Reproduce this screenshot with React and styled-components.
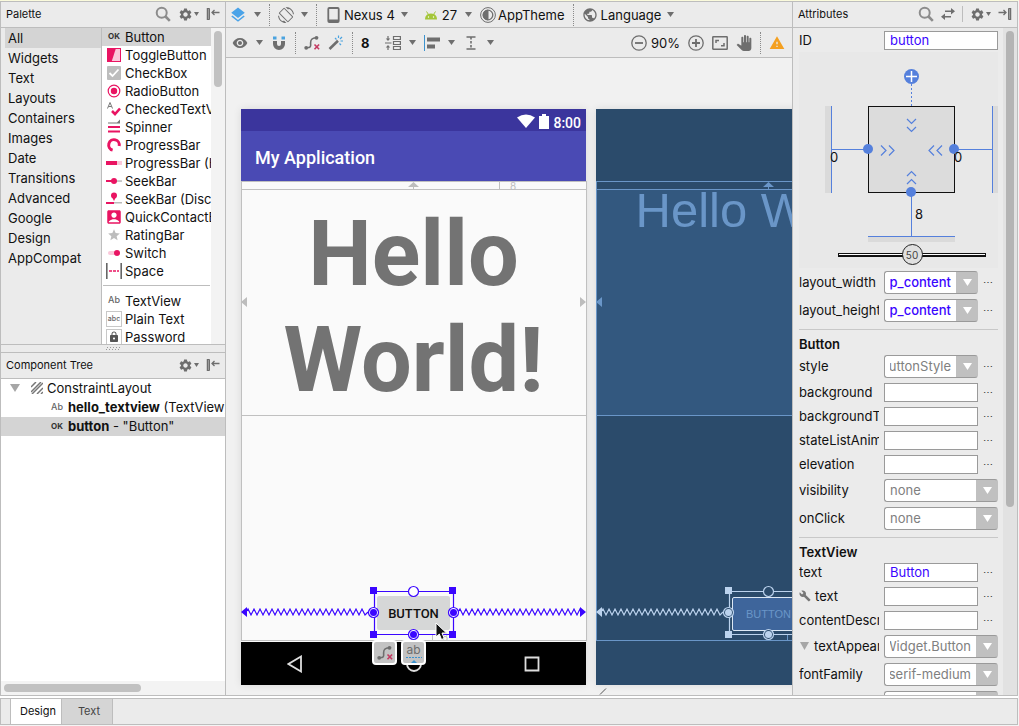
import React from "react";
import styled, { createGlobalStyle, css } from "styled-components";
import { MdLayers, MdVisibility, MdScreenRotation, MdPublic, MdPanTool, MdWarning, MdSettings, MdBuild, MdAccountBox, MdStar, MdLock } from "react-icons/md";

const line = "#bdbdbd";
const chrome = "#ebebeb";
const iconGray = "#6e6e6e";
const pink = "#e91462";
const violet = "#3a06ff";
const wire = "#5580dc";

const GlobalStyle = createGlobalStyle`
  *, *::before, *::after { box-sizing: border-box; }
  body { margin: 0; font: 13px/18px Inter, "Noto Sans", sans-serif; color: #111; background: ${chrome}; }
  button, input, select { font: inherit; color: inherit; margin: 0; }
  h2, h3, ul { margin: 0; padding: 0; font: inherit; list-style: none; }
  svg { display: block; flex: none; }
`;

/* ---------- page frame ---------- */
const Window = styled.div`
  display: flex;
  flex-direction: column;
  height: 100vh;
  min-height: 480px;
  overflow: hidden;
  border-top: 1px solid #fafadc;
  border-right: 1px solid #f4f4f4;
  border-bottom: 1px solid #f4f4f4;
`;
const Workspace = styled.div`
  flex: 1;
  min-height: 0;
  display: grid;
  grid-template-columns: 226px minmax(0, 1fr) 226px;
  border-top: 1px solid ${line};
  border-bottom: 1px solid ${line};
`;
const Side = styled.aside`
  display: flex;
  flex-direction: column;
  min-height: 0;
  min-width: 0;
  background: ${chrome};
  border-left: 1px solid ${line};
  border-right: 1px solid ${line};
`;
const PanelHeader = styled.header`
  flex: none;
  display: flex;
  align-items: center;
  gap: 7px;
  height: 26px;
  padding: 0 5px 1px;
  border-bottom: 1px solid ${line};
`;
const PanelTitle = styled.h2`
  flex: 1;
  font-size: 11px;
`;
const HeaderRule = styled.span`
  width: 1px;
  height: 16px;
  background: ${line};
`;
const IconButton = styled.button`
  display: flex;
  align-items: center;
  gap: ${(p) => p.$gap || 0}px;
  padding: 0;
  border: 0;
  background: none;
  color: ${(p) => p.$color || iconGray};
  white-space: nowrap;
`;
const Label = styled.span`
  color: #111;
  font-weight: ${(p) => (p.$bold ? 700 : 400)};
`;

/* ---------- palette ---------- */
const PaletteBody = styled.div`
  flex: 317 1 0;
  min-height: 0;
  display: flex;
  overflow: hidden;
`;
const Categories = styled.ul`
  width: 101px;
  flex: none;
  padding-left: 4px;
  border-right: 1px solid ${line};
`;
const Category = styled.li`
  padding-left: 3px;
  line-height: 20px;
  background: ${(p) => (p.$active ? "#d4d4d4" : "transparent")};
`;
const Widgets = styled.ul`
  flex: 1;
  min-width: 0;
  overflow: hidden;
  background: #fff;
`;
const Widget = styled.li`
  display: flex;
  align-items: center;
  gap: 3px;
  height: 18px;
  padding-left: 4px;
  white-space: nowrap;
  background: ${(p) => (p.$active ? "#d4d4d4" : "transparent")};
`;
const WidgetDivider = styled.li`
  height: 1px;
  margin: 5px 1px 6px;
  background: ${line};
`;
const VTrack = styled.div`
  flex: none;
  width: 14px;
  padding: 3px;
  background: ${(p) => (p.$dark ? "#e2e2e2" : "#f3f3f3")};
`;
const VThumb = styled.div`
  width: 8px;
  height: ${(p) => p.$size};
  border-radius: 4px;
  background: ${(p) => (p.$dark ? "#b4b4b4" : "#c1c1c1")};
`;
const Splitter = styled.div`
  flex: none;
  height: 9px;
  display: flex;
  align-items: center;
  justify-content: center;
  border-top: 1px solid ${line};
  border-bottom: 1px solid ${line};
`;

/* ---------- component tree ---------- */
const Tree = styled.ul`
  flex: 302 1 0;
  min-height: 0;
  overflow: hidden;
  background: #fff;
`;
const TreeRow = styled.li`
  display: flex;
  align-items: center;
  gap: 4px;
  height: 19px;
  padding: 0 0 1px ${(p) => (p.$depth ? 49 : 9)}px;
  white-space: pre;
  background: ${(p) => (p.$active ? "#d4d4d4" : "transparent")};
`;
const Toggle = styled.span`
  width: 17px;
`;
const HTrack = styled.div`
  flex: none;
  height: 14px;
  padding: 3px;
  background: #f3f3f3;
`;
const HThumb = styled.div`
  width: 63%;
  height: 8px;
  border-radius: 4px;
  background: #c1c1c1;
`;

/* ---------- editor ---------- */
const Editor = styled.main`
  display: flex;
  flex-direction: column;
  min-width: 0;
  min-height: 0;
  background: ${chrome};
`;
const Toolbar = styled.div`
  flex: none;
  display: flex;
  align-items: center;
  gap: 8px;
  height: ${(p) => (p.$tall ? 30 : 26)}px;
  padding: 0 7px 0 ${(p) => (p.$tall ? 6 : 3)}px;
  border-bottom: 1px solid ${line};
  overflow: hidden;
`;
const Dots = styled.span`
  width: 1px;
  height: 22px;
  border-left: 1px dotted #8a8a8a;
`;
const Spacer = styled.span`
  flex: 1;
`;
const Gap = styled.span`
  width: 0;
`;
const Cluster = styled.span`
  display: flex;
  align-items: center;
  gap: 4px;
`;
const Surface = styled.div`
  flex: 1;
  min-height: 0;
  position: relative;
  display: flex;
  gap: 10px;
  padding: 51px 0 0 15px;
  overflow: hidden;
  background: #f1f1f1;
`;
const Grip = styled.svg`
  position: absolute;
  left: 373px;
  bottom: 0;
`;
const Screen = styled.section`
  flex: none;
  position: relative;
  width: 345px;
  height: 576px;
  display: flex;
  flex-direction: column;
  background: ${(p) => (p.$blue ? "#2b4b6b" : "#fafafa")};
  box-shadow: 0 0 8px rgba(0, 0, 0, 0.1);
`;
const StatusBar = styled.div`
  height: 22px;
  display: flex;
  align-items: center;
  justify-content: flex-end;
  gap: 4px;
  padding: 3px 5px 0 0;
  color: #fff;
  background: #3b359d;
  font: 500 14px/14px Roboto, sans-serif;
`;
const Clock = styled.span`
  padding-top: 3px;
`;
const AppBar = styled.div`
  height: 50px;
  padding: 2px 14px 0;
  color: #fff;
  background: #4a4ab4;
  font: 500 18px/50px Roboto, sans-serif;
`;
const Content = styled.div`
  flex: 1;
  display: flex;
  flex-direction: column;
  align-items: center;
  padding-top: ${(p) => (p.$blue ? 80 : 8)}px;
`;
const Hello = styled.div`
  width: 100%;
  height: 226px;
  padding-top: 13px;
  text-align: center;
  color: #737373;
  font: 700 90px/106px Roboto, sans-serif;
`;
const HelloBlue = styled.div`
  width: 100%;
  height: 227px;
  display: flex;
  justify-content: center;
  white-space: nowrap;
  color: #6a96c8;
  background: #33587f;
  font: 49px/42px "Liberation Sans", Arial, sans-serif;
`;
const Raised = styled.button`
  width: 73px;
  height: 34px;
  margin-top: 181px;
  padding: 0;
  border: ${(p) => (p.$blue ? "1px solid #dce8f5" : "0")};
  border-radius: 2px;
  color: ${(p) => (p.$blue ? "#6a96c8" : "#111")};
  background: ${(p) => (p.$blue ? "#3e659b" : "#d6d7d7")};
  font: ${(p) => (p.$blue ? '11px "Liberation Sans", Arial' : "500 13px Roboto")}, sans-serif;
`;
const NavBar = styled.div`
  height: 43px;
  display: flex;
  align-items: center;
  justify-content: space-between;
  padding: 0 46px;
  background: #000;
`;
const Overlay = styled.svg`
  position: absolute;
  inset: 0;
  overflow: visible;
  pointer-events: none;
`;
const Chips = styled.div`
  position: absolute;
  left: 131px;
  top: 531px;
  display: flex;
  gap: 4px;
`;
const Chip = styled.button`
  width: 25px;
  height: 25px;
  display: flex;
  flex-direction: column;
  align-items: center;
  justify-content: center;
  padding: 0;
  border: 2px solid #fff;
  border-radius: 4px;
  background: #c3c3c3;
  color: #6e6e6e;
  font-size: 12px;
  line-height: 13px;
`;
const Pointer = styled.svg`
  position: absolute;
  left: 194px;
  top: 513px;
`;

/* ---------- attributes ---------- */
const AttrBody = styled.div`
  flex: 1;
  min-height: 0;
  display: flex;
  overflow: hidden;
`;
const AttrForm = styled.form`
  flex: 1;
  min-width: 0;
  display: flex;
  flex-direction: column;
  gap: 5px;
  padding: 3px 5px 0 6px;
  overflow: hidden;
`;
const Row = styled.div`
  flex: none;
  display: flex;
  align-items: center;
  gap: 5px;
  height: ${(p) => (p.$tall ? 23 : 19)}px;
`;
const RowLabel = styled.label`
  flex: none;
  display: flex;
  align-items: center;
  gap: 4px;
  width: 80px;
  padding-bottom: 1px;
  overflow: hidden;
  white-space: nowrap;
`;
const Field = styled.input`
  flex: 1;
  min-width: 0;
  height: 19px;
  padding: 0 5px 1px;
  border: 1px solid #9a9a9a;
  border-radius: 0;
  outline: 0;
  background: #fff;
  color: ${violet};
`;
const Combo = styled.span`
  flex: 1;
  min-width: 0;
  display: grid;
  align-items: center;
  color: #fff;
  svg { grid-area: 1 / 1; justify-self: end; margin-right: 6px; pointer-events: none; }
`;
const Select = styled.select`
  grid-area: 1 / 1;
  appearance: none;
  width: 100%;
  height: 23px;
  padding: 0 ${(p) => (p.$clip ? 26 : 22)}px 1px 5px;
  border: 1px solid #9a9a9a;
  border-right-color: #c0c0c0;
  border-radius: 3px;
  background: linear-gradient(to left, #c0c0c0 21px, #fff 21px);
  color: ${(p) => (p.$set ? violet : "#808080")};
  font-weight: ${(p) => (p.$set ? 500 : 400)};
  ${(p) => p.$clip && css`direction: rtl;`}
`;
const More = styled.button`
  width: 15px;
  height: 14px;
  padding: 0 6px 2px 0;
  border: 0;
  background: none;
  font-size: 10px;
  line-height: 10px;
  color: #333;
`;
const GroupTitle = styled.h3`
  flex: none;
  height: 26px;
  margin: 2px 0 -5px;
  padding-top: 4px;
  border-top: 1px solid #c8c8c8;
  line-height: 20px;
  font-weight: 600;
`;
const Inspector = styled.div`
  flex: none;
  display: flex;
  flex-direction: column;
  align-items: center;
  height: 216px;
  margin: -3px 0 -2px;
  background: #e8e8e8;
  font-size: 13px;
`;
const Bias = styled.label`
  display: grid;
  place-items: center;
  width: 148px;
  margin: 1px 0 0 27px;
  span { grid-area: 1 / 1; font-size: 10px; color: #444; pointer-events: none; z-index: 1; }
`;
const Range = styled.input`
  grid-area: 1 / 1;
  appearance: none;
  width: 100%;
  height: 23px;
  background: none;
  &::-webkit-slider-runnable-track { height: 4px; background: #fff; border: 1px solid #111; border-bottom-width: 2px; }
  &::-webkit-slider-thumb { appearance: none; width: 21px; height: 21px; margin-top: -10px; border: 1px solid #222; border-radius: 50%; background: #e0e0e0; }
`;

/* ---------- tabs ---------- */
const TabBar = styled.nav`
  flex: none;
  display: flex;
  height: 27px;
  margin-top: 2px;
  padding-left: 9px;
  border: 1px solid ${line};
  outline: 2px solid #fff;
  background: ${chrome};
`;
const Tab = styled.button`
  width: 51px;
  padding: 0 0 2px 4px;
  border: 0;
  border-right: 1px solid ${line};
  font-size: 11px;
  color: ${(p) => (p.$active ? "#111" : "#444")};
  background: ${(p) => (p.$active ? "#fff" : "#d5d5d5")};
  &:first-child { width: 52px; border-left: 1px solid ${line}; }
`;

/* ---------- icons ---------- */
const icon16 = { width: 16, height: 16, viewBox: "0 0 16 16" };
const Caret = ({ size = 7 }) => (
  <svg width={size} height={size > 6 ? 5 : 4} viewBox="0 0 8 5" preserveAspectRatio="none"><path d="M0 0h8L4 5z" fill="currentColor" /></svg>
);
const Search = () => (
  <svg {...icon16} fill="none" stroke="currentColor"><circle cx="6.700" cy="6.700" r="5" strokeWidth="2" /><path d="M10.500 10.500l4.300 4.300" strokeWidth="2.600" /></svg>
);
const Dock = ({ flip }) => (
  <svg width="14" height="12" viewBox="0 0 14 12" fill="none" stroke="currentColor">
    <g transform={flip ? "translate(14 0) scale(-1 1)" : undefined}>
      <path d="M1.500.5h2v11h-2z" fill="#aaa" /><path d="M1.500 0v12" strokeWidth="1.500" /><path d="M6 4.500h7.500M8.500 2L6 4.500 8.500 7" strokeWidth="1.300" />
    </g>
  </svg>
);
const Gear = () => (
  <IconButton type="button" aria-label="Settings" $gap={1}><MdSettings size={15} /><Caret size={5} /></IconButton>
);
const Unlink = () => (
  <svg {...icon16} fill="none" stroke="currentColor" strokeWidth="1.600">
    <circle cx="2.200" cy="12.800" r="1.900" fill="currentColor" stroke="none" /><circle cx="12.500" cy="2.800" r="1.900" fill="currentColor" stroke="none" />
    <path d="M2.200 12.800C8 13 6.500 10 6.600 8S6.500 3 12 2.800" /><path d="M10.500 9.500l4.600 4.800M15.100 9.500l-4.600 4.800" stroke="#c43a62" />
  </svg>
);
const Magnet = () => (
  <svg {...icon16}><path d="M2 6v3a6 6 0 0 0 12 0V6h-4v3a2 2 0 0 1-4 0V6z" fill="currentColor" /><path d="M2 1.500h3.500v3H2zM10.500 1.500H14v3h-3.500z" fill="#4aa3e0" /></svg>
);
const Wand = () => (
  <svg {...icon16} fill="none"><path d="M1.500 14L10 5.800" stroke="currentColor" strokeWidth="2.600" /><path d="M7 3l1.500 1.500M10.500.5v2.500M14 2l-2 2M12.500 6H15M11.500 8.500L13 10" stroke="#4aa3e0" strokeWidth="1.200" /></svg>
);
const Pack = () => (
  <svg {...icon16} fill="none" stroke="currentColor" strokeWidth="1.200"><path d="M8.500 1.500h6.900v3H8.500zM8.500 6.500h6.900v3H8.500zM8.500 11.500h6.900v3H8.500z" /><path d="M3 1v4M3 15v-4M0 8h6.500" /><path d="M.8 3.500h4.400L3 6zM.8 12.500h4.400L3 10z" fill="currentColor" stroke="none" /></svg>
);
const Align = () => (
  <svg {...icon16}><path d="M.5 0v16" stroke="#3b93cf" /><path d="M3 2.500h13v4H3zM3 9.500h8v4H3z" fill="currentColor" /></svg>
);
const Guide = () => (
  <svg {...icon16} fill="none" stroke="currentColor" strokeWidth="1.600"><path d="M3.500 2h9M3.500 14h9" /><path d="M8 2v12" strokeDasharray="2.500 1.500" /></svg>
);
const Phone = () => (
  <svg {...icon16}><rect x="3.300" y="1" width="10.400" height="14" rx="1" fill="none" stroke="currentColor" strokeWidth="1.800" /><path d="M3 12.500h11V15H3z" fill="currentColor" /></svg>
);
const Android = () => (
  <svg width="14" height="14" viewBox="0 0 14 14"><path d="M1 11.500C1 8.500 2.500 5.500 7 5.500s6 3 6 6z" fill="#a4c639" /><path d="M2.500 3.500l2 3M11.500 3.500l-2 3" stroke="#a4c639" /><circle cx="4.500" cy="9" r=".7" fill="#fff" /><circle cx="9.500" cy="9" r=".7" fill="#fff" /></svg>
);
const Theme = () => (
  <svg {...icon16} fill="none" stroke="currentColor"><circle cx="8" cy="8" r="7.400" /><circle cx="8" cy="8" r="4.800" strokeWidth="1.300" /><path d="M8 3.200a4.800 4.800 0 0 0 0 9.600z" fill="currentColor" /></svg>
);
const Zoom = ({ plus }) => (
  <svg {...icon16} fill="none" stroke="currentColor" strokeWidth="1.300"><circle cx="8" cy="8" r="7.200" /><path d={plus ? "M4 8h8M8 4v8" : "M4 8h8"} strokeWidth="1.800" /></svg>
);
const Fit = () => (
  <svg {...icon16} fill="none" stroke="currentColor" strokeWidth="1.500"><rect x=".8" y="1.800" width="14.400" height="12.400" rx=".5" /><path d="M4 8V5.500h3M9 10.800h3V8" /></svg>
);
const Swap = () => (
  <svg width="14" height="12" viewBox="0 0 14 12" fill="currentColor"><path d="M4 2.500h6V0l4 3.300-4 3.200V4H4zM10 8H4V5.500L0 8.700 4 12V9.500h6z" /></svg>
);

const TextGlyph = styled.span`
  flex: none;
  width: ${(p) => (p.$small ? 14 : 16)}px;
  height: ${(p) => (p.$small ? 12 : 16)}px;
  line-height: ${(p) => (p.$small ? 12 : 14)}px;
  text-align: center;
  font-size: ${(p) => p.$size || 8}px;
  font-weight: ${(p) => (p.$bold ? 700 : 500)};
  color: ${(p) => (p.$bold ? "#333" : "#666")};
  border: ${(p) => (p.$box ? "1px solid #c8c8c8" : "0")};
`;
const glyphs = {
  ok: <TextGlyph $bold>OK</TextGlyph>,
  toggle: <svg {...icon16}><rect x="1.500" y="1.500" width="13" height="13" fill="#fbc8da" stroke={pink} /><path d="M1 1h9L5.500 15H1z" fill={pink} /></svg>,
  check: <svg {...icon16}><rect x="1" y="1" width="14" height="14" rx="1" fill="#bdbdbd" /><path d="M3.500 8l3 3 6-6.500" fill="none" stroke="#fff" strokeWidth="1.800" /></svg>,
  radio: <svg {...icon16}><circle cx="8" cy="8" r="5.800" fill="none" stroke={pink} strokeWidth="1.200" /><circle cx="8" cy="8" r="3.200" fill={pink} /></svg>,
  checked: <svg {...icon16} fill="none"><path d="M1.500 7.500L4 1.500l2.500 6M2.500 5.500h3" stroke="#777" /><path d="M6 10l3 3 5-5.500" stroke={pink} strokeWidth="2.600" /></svg>,
  spinner: <svg {...icon16}><path d="M2 7h12v2H2zM2 11.500h12v2H2z" fill={pink} /><path d="M2 3.500h9l3-3v4H2z" fill="#777" /></svg>,
  ring: <svg {...icon16}><circle cx="8" cy="8" r="5.300" fill="none" stroke={pink} strokeWidth="3" strokeDasharray="24 20" transform="rotate(105 8 8)" /></svg>,
  bar: <svg {...icon16}><path d="M0 6h16v4H0z" fill="#fbc8da" /><path d="M0 6h11v4H0z" fill={pink} /></svg>,
  seek: <svg {...icon16}><path d="M8 7.300h8v1.500H8z" fill="#bbb" /><path d="M0 7h8v2H0z" fill={pink} /><circle cx="8" cy="8" r="3" fill={pink} /></svg>,
  seekd: <svg {...icon16}><path d="M8 11h8v1.500H8z" fill="#bbb" /><path d="M0 11h8v2H0z" fill={pink} /><circle cx="8" cy="4.500" r="3" fill={pink} /><path d="M6 6h4l-2 4z" fill={pink} /></svg>,
  contact: <MdAccountBox size={18} color={pink} />,
  star: <MdStar size={14} color="#bdbdbd" />,
  sw: <svg {...icon16}><path d="M4 6h8v4H4a2 2 0 0 1 0-4z" fill="#fbc8da" /><circle cx="11" cy="8" r="3" fill={pink} /></svg>,
  space: <svg {...icon16}><path d="M.8 0v16M15.200 0v16" stroke="#666" strokeWidth="1.600" /><path d="M3 8h10" stroke={pink} strokeWidth="1.600" strokeDasharray="3 1" /></svg>,
  ab: <TextGlyph $size={9}>Ab</TextGlyph>,
  abc: <TextGlyph $size={7} $box>abc</TextGlyph>,
  lock: <svg {...icon16}><rect x=".5" y=".5" width="15" height="15" fill="#fff" stroke="#c8c8c8" /><MdLock size={12} x={2} y={2} color="#555" /></svg>,
};
const GlyphBox = styled.span`
  flex: none;
  width: 16px;
  display: flex;
  justify-content: center;
`;

const categories = ["All", "Widgets", "Text", "Layouts", "Containers", "Images", "Date", "Transitions", "Advanced", "Google", "Design", "AppCompat"];
const widgets = [
  ["ok", "Button"], ["toggle", "ToggleButton"], ["check", "CheckBox"], ["radio", "RadioButton"], ["checked", "CheckedTextView"],
  ["spinner", "Spinner"], ["ring", "ProgressBar"], ["bar", "ProgressBar (Horizontal)"], ["seek", "SeekBar"], ["seekd", "SeekBar (Discrete)"],
  ["contact", "QuickContactBadge"], ["star", "RatingBar"], ["sw", "Switch"], ["space", "Space"], null,
  ["ab", "TextView"], ["abc", "Plain Text"], ["lock", "Password"],
];

const LeftSide = () => (
  <Side>
    <PanelHeader>
      <PanelTitle>Palette</PanelTitle>
      <IconButton type="button" aria-label="Search palette" $color="#8c8c8c"><Search /></IconButton>
      <Gear />
      <IconButton type="button" aria-label="Hide palette"><Dock /></IconButton>
    </PanelHeader>
    <PaletteBody>
      <Categories>{categories.map((c, i) => <Category key={c} $active={i === 0}>{c}</Category>)}</Categories>
      <Widgets>
        {widgets.map((w, i) => w ? <Widget key={i} $active={i === 0}><GlyphBox>{glyphs[w[0]]}</GlyphBox>{w[1]}</Widget> : <WidgetDivider key={i} />)}
      </Widgets>
      <VTrack><VThumb $size="56px" /></VTrack>
    </PaletteBody>
    <Splitter><svg width="15" height="5"><path d="M1 1.500h14M0 3.500h15" stroke="#999" strokeDasharray="1 2" /></svg></Splitter>
    <PanelHeader>
      <PanelTitle>Component Tree</PanelTitle>
      <Gear />
      <IconButton type="button" aria-label="Hide component tree"><Dock /></IconButton>
    </PanelHeader>
    <Tree>
      <TreeRow>
        <Toggle><svg width="10" height="8"><path d="M0 0h10L5 8z" fill="#a6a6a6" /></svg></Toggle>
        <svg width="12" height="12" stroke="#777" strokeWidth="1.500"><path d="M0 5l5-5M0 10l10-10M1 12L12 1M6 12l6-6M10 12l2-2" /></svg>
        <span>ConstraintLayout</span>
      </TreeRow>
      <TreeRow $depth><TextGlyph $small $size={9}>Ab</TextGlyph><span><b>hello_textview</b> (TextView)</span></TreeRow>
      <TreeRow $depth $active><TextGlyph $small $bold>OK</TextGlyph><span><b>button</b> - "Button"</span></TreeRow>
    </Tree>
    <HTrack><HThumb /></HTrack>
  </Side>
);

/* spring line: zigzag between two x positions around a centre y */
const spring = (x1, x2, y) => {
  let d = `M${x1} ${y}`;
  for (let x = x1 + 2, up = true; x < x2; x += 3, up = !up) d += `L${x} ${y + (up ? -3 : 3)}`;
  return `${d}L${x2} ${y}`;
};

const Constraints = ({ frame, soft, main, hole, margins }) => (
  <Overlay width="345" height="576">
    <g fill="none" stroke={frame}>
      <path d="M0 80.500h345M0 306.500h345M258.500 73v7M191.500 526v5" />
      <rect x=".5" y="72.500" width="345" height="459" />
      <path d="M172.500 76v5" />
    </g>
    <path d="M167 78l5.500-5 5.500 5zM0 193l6-5v10zM345 193l-6-5v10z" fill={soft} />
    {margins && <g fontSize="10" fill={soft}><text x="269" y="81">8</text><text x="201" y="532">8</text></g>}
    <g fill="none" stroke={main} strokeWidth="1.200">
      <path d={spring(5, 127, 503)} /><path d={spring(217, 340, 503)} />
      <path d="M133.500 482.500h79v43h-79z" />
    </g>
    <path d="M0 503l6-5v10zM345 503l-6-5v10zM129 478h7v7h-7zM208 478h7v7h-7zM129 522h7v7h-7zM208 522h7v7h-7z" fill={main} />
    <g stroke={main} fill={hole} strokeWidth="1.200">
      <circle cx="172.500" cy="482.500" r="5" /><circle cx="132.500" cy="503.500" r="5" /><circle cx="212.500" cy="503.500" r="5" /><circle cx="172.500" cy="525.500" r="5" />
    </g>
    <g fill={main}><circle cx="132.500" cy="503.500" r="3.500" /><circle cx="212.500" cy="503.500" r="3.500" /><circle cx="172.500" cy="525.500" r="3.500" /></g>
  </Overlay>
);

const Center = () => (
  <Editor>
    <Toolbar>
      <IconButton type="button" aria-label="Design surface" $gap={7}><MdLayers size={18} color="#4aa3e8" /><Caret /></IconButton>
      <Dots />
      <IconButton type="button" aria-label="Orientation" $gap={7}><MdScreenRotation size={16} /><Caret /></IconButton>
      <Dots />
      <IconButton type="button" $gap={3}><Phone /><Label>Nexus 4</Label><span /><Caret /></IconButton>
      <Gap />
      <IconButton type="button" $gap={4}><Android /><Label>27</Label><span /><Caret /></IconButton>
      <IconButton type="button" $gap={2}><Theme /><Label>AppTheme</Label></IconButton>
      <Dots />
      <IconButton type="button" $gap={3}><MdPublic size={16} /><Label>Language</Label><span /><Caret /></IconButton>
    </Toolbar>
    <Toolbar $tall>
      <IconButton type="button" aria-label="View options" $gap={8}><MdVisibility size={16} /><Caret /></IconButton>
      <IconButton type="button" aria-label="Autoconnect"><Magnet /></IconButton>
      <Dots />
      <IconButton type="button" aria-label="Clear constraints"><Unlink /></IconButton>
      <IconButton type="button" aria-label="Infer constraints"><Wand /></IconButton>
      <Dots />
      <IconButton type="button"><Label $bold>8</Label></IconButton>
      <Gap />
      <IconButton type="button" aria-label="Pack" $gap={8}><Pack /><Caret /></IconButton>
      <IconButton type="button" aria-label="Align" $gap={8}><Align /><Caret /></IconButton>
      <IconButton type="button" aria-label="Guidelines" $gap={8}><Guide /><Caret /></IconButton>
      <Spacer />
      <Cluster>
        <IconButton type="button" aria-label="Zoom out"><Zoom /></IconButton>
        <Label>90%</Label>
      </Cluster>
      <IconButton type="button" aria-label="Zoom in"><Zoom plus /></IconButton>
      <IconButton type="button" aria-label="Zoom to fit"><Fit /></IconButton>
      <IconButton type="button" aria-label="Pan"><MdPanTool size={16} /></IconButton>
      <Dots />
      <IconButton type="button" aria-label="Warnings"><MdWarning size={16} color="#f4a020" /></IconButton>
    </Toolbar>
    <Surface>
      <Screen>
        <StatusBar>
          <svg width="18" height="15"><path d="M0 3.500Q9-2.500 18 3.500L9 14z" fill="#fff" /></svg>
          <svg width="10" height="15"><path d="M0 2h3V0h4v2h3v13H0z" fill="#fff" /></svg>
          <Clock>8:00</Clock>
        </StatusBar>
        <AppBar>My Application</AppBar>
        <Content>
          <Hello>Hello<br />World!</Hello>
          <Raised type="button">BUTTON</Raised>
        </Content>
        <NavBar>
          <svg width="16" height="18"><path d="M14 1.500v15L1.500 9z" fill="none" stroke="#ddd" strokeWidth="1.800" /></svg>
          <svg width="16" height="16"><circle cx="8" cy="8" r="7" fill="none" stroke="#ddd" strokeWidth="1.800" /></svg>
          <svg width="16" height="16"><path d="M1.500 1.500h13v13h-13z" fill="none" stroke="#ddd" strokeWidth="1.800" /></svg>
        </NavBar>
        <Constraints frame="#c0c0c0" soft="#bdbdbd" main={violet} hole="#fff" margins />
        <Chips>
          <Chip type="button" aria-label="Delete constraints"><Unlink /></Chip>
          <Chip type="button"><span>ab</span><svg width="16" height="7"><path d="M0 1.500h16" stroke="#3b93cf" strokeDasharray="2 1" /><path d="M5 7l3-3 3 3z" fill="#3b93cf" /></svg></Chip>
        </Chips>
        <Pointer width="13" height="19" viewBox="0 0 13 19"><path d="M1 1v14l3.300-3 2.200 5.500 2.700-1.100L7 11h4.500z" fill="#111" stroke="#fff" /></Pointer>
      </Screen>
      <Screen $blue>
        <Content $blue>
          <HelloBlue>Hello World!</HelloBlue>
          <Raised type="button" $blue>BUTTON</Raised>
        </Content>
        <Constraints frame="#6a96c8" soft="#6a96c8" main="#bcd3ee" hole="#2b4b6b" />
      </Screen>
      <Grip width="8" height="7"><path d="M1 6.500L7 .5" stroke="#555" /></Grip>
    </Surface>
  </Editor>
);

const TextRow = ({ name, id, value = "", prefix, wide }) => (
  <Row>
    <RowLabel htmlFor={id || name}>{prefix}{name}</RowLabel>
    <Field id={id || name} defaultValue={value} />
    {!wide && <More type="button" aria-label={`More ${name}`}>⋯</More>}
  </Row>
);
const SelectRow = ({ name, value, prefix, more, set, clip }) => (
  <Row $tall>
    <RowLabel htmlFor={name}>{prefix}{name}</RowLabel>
    <Combo>
      <Select id={name} $set={set} $clip={clip} defaultValue={value}><option>{value}</option></Select>
      <svg width="9" height="7"><path d="M0 0h9L4.500 7z" fill="currentColor" /></svg>
    </Combo>
    {more && <More type="button" aria-label={`More ${name}`}>⋯</More>}
  </Row>
);

const RightSide = () => (
  <Side>
    <PanelHeader>
      <PanelTitle>Attributes</PanelTitle>
      <IconButton type="button" aria-label="Search attributes" $color="#8c8c8c"><Search /></IconButton>
      <IconButton type="button" aria-label="View all attributes"><Swap /></IconButton>
      <HeaderRule />
      <Gear />
      <IconButton type="button" aria-label="Hide attributes"><Dock flip /></IconButton>
    </PanelHeader>
    <AttrBody>
      <AttrForm>
        <TextRow name="ID" value="button" wide />
        <Inspector>
          <svg width="199" height="190" fill="none" stroke={wire}>
            <path d="M26 54h6v87h-6zM194 54h5v87h-5zM69 185h87v5H69z" fill="#dadada" stroke="none" />
            <rect x="69.500" y="54.500" width="86" height="86" fill="#dcdcdc" stroke="#111" />
            <path d="M32.500 54v87M193.500 54v87M69 184.500h87M33 97.500h37M155 97.500h38M112.500 141v43" />
            <path d="M112.500 32v22" strokeDasharray="2 2" />
            <path d="M82 93.500l5 5-5 5M90 93.500l5 5-5 5M135 93.500l-5 5 5 5M143 93.500l-5 5 5 5M108 67l4.500 4.500L117 67M108 75l4.500 4.500L117 75M108 124l4.500-4.500L117 124M108 132l4.500-4.500L117 132" strokeWidth="1.200" />
            <g fill={wire} stroke="none"><circle cx="112.500" cy="24.500" r="7.500" /><circle cx="69" cy="97" r="5" /><circle cx="155" cy="97" r="5" /><circle cx="112" cy="140" r="5" /></g>
            <path d="M107 24.500h11M112.500 19v11" stroke="#fff" strokeWidth="1.500" />
            <g fill="#111" stroke="none"><text x="31" y="110">0</text><text x="155" y="110">0</text><text x="116" y="167">8</text></g>
          </svg>
          <Bias><Range type="range" aria-label="Horizontal bias" defaultValue={50} /><span>50</span></Bias>
        </Inspector>
        <SelectRow name="layout_width" value="p_content" set clip more />
        <SelectRow name="layout_height" value="p_content" set clip more />
        <GroupTitle>Button</GroupTitle>
        <SelectRow name="style" value="uttonStyle" clip more />
        <TextRow name="background" />
        <TextRow name="backgroundTint" />
        <TextRow name="stateListAnimator" />
        <TextRow name="elevation" />
        <SelectRow name="visibility" value="none" />
        <SelectRow name="onClick" value="none" />
        <GroupTitle>TextView</GroupTitle>
        <TextRow name="text" value="Button" />
        <TextRow name="text" id="tools-text" prefix={<MdBuild size={12} color="#777" />} />
        <TextRow name="contentDescription" />
        <SelectRow name="textAppearance" value="Widget.Button" clip prefix={<svg width="11" height="8"><path d="M1 0h9L5.500 8z" fill="#a6a6a6" /></svg>} />
        <SelectRow name="fontFamily" value="serif-medium" clip />
        <SelectRow name="typeface" value="none" />
      </AttrForm>
      <VTrack $dark><VThumb $dark $size="72%" /></VTrack>
    </AttrBody>
  </Side>
);

export default function App() {
  return (
    <>
      <GlobalStyle />
      <Window>
        <Workspace>
          <LeftSide />
          <Center />
          <RightSide />
        </Workspace>
        <TabBar>
          <Tab type="button" $active>Design</Tab>
          <Tab type="button">Text</Tab>
        </TabBar>
      </Window>
    </>
  );
}
